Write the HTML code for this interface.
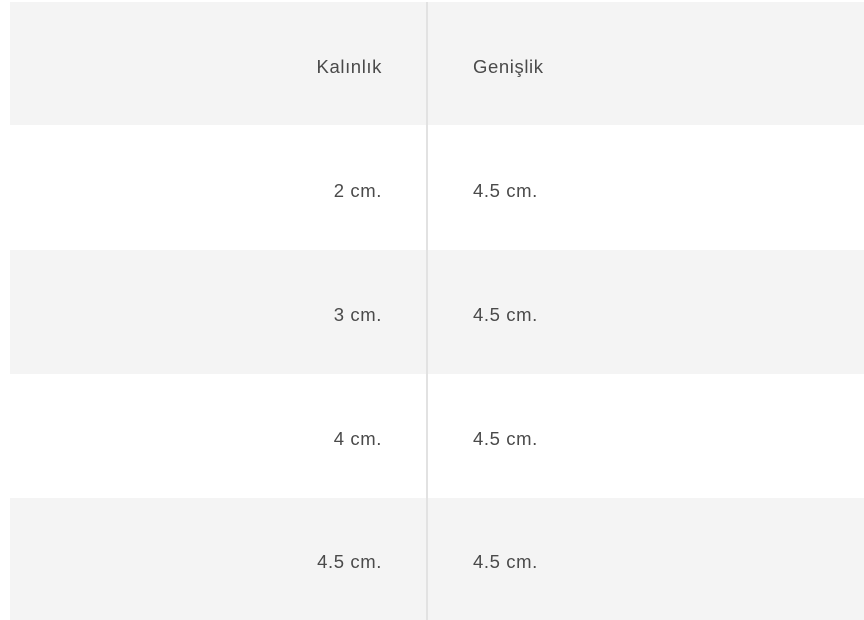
<!DOCTYPE html>
<html><head><style>
body{margin:0;width:864px;height:620px;background:#fff;font-family:"Liberation Sans",sans-serif;color:#4a4a4a;position:relative;overflow:hidden}
.r{position:absolute;left:10px;width:854px}
.g{background:#f4f4f4}
.l,.v{position:absolute;font-size:18.5px;line-height:22px;letter-spacing:0.6px}
.l{left:0;width:372px;text-align:right}
.v{left:463px}
.d{position:absolute;left:426px;top:2px;width:2px;height:618px;background:#e2e2e2}
</style></head><body>
<div class="r g" style="top:2px;height:123px"><span class="l" style="top:54px">Kalınlık</span><span class="v" style="top:54px">Genişlik</span></div>
<div class="r" style="top:125px;height:125px"><span class="l" style="top:55px">2 cm.</span><span class="v" style="top:55px">4.5 cm.</span></div>
<div class="r g" style="top:250px;height:124px"><span class="l" style="top:54px">3 cm.</span><span class="v" style="top:54px">4.5 cm.</span></div>
<div class="r" style="top:374px;height:124px"><span class="l" style="top:54px">4 cm.</span><span class="v" style="top:54px">4.5 cm.</span></div>
<div class="r g" style="top:498px;height:122px"><span class="l" style="top:53px">4.5 cm.</span><span class="v" style="top:53px">4.5 cm.</span></div>
<div class="d"></div>
</body></html>
